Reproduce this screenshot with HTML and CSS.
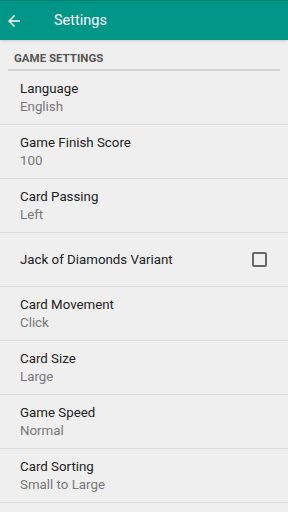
FILE: index.html
```html
<!DOCTYPE html>
<html lang="en">
<head>
  <meta charset="UTF-8" />
  <title>Settings</title>
  <meta name="viewport" content="width=device-width, initial-scale=1.0"/>
  <link rel="stylesheet" href="styles.css">
</head>
<body>
  <div class="toolbar">
    <svg class="back" width="18" height="18" viewBox="0 0 24 24">
      <path d="M20 11H7.83l5.59-5.59L12 4l-8 8 8 8 1.41-1.41L7.83 13H20v-2z" fill="#fff"/>
    </svg>
    <span class="title">Settings</span>
  </div>

  <div class="category">GAME SETTINGS</div>

  <div class="pref">
    <div class="pref-title">Language</div>
    <div class="pref-summary">English</div>
  </div>
  <div class="pref">
    <div class="pref-title">Game Finish Score</div>
    <div class="pref-summary">100</div>
  </div>
  <div class="pref">
    <div class="pref-title">Card Passing</div>
    <div class="pref-summary">Left</div>
  </div>
  <div class="pref pref-check">
    <div class="pref-title">Jack of Diamonds Variant</div>
    <div class="checkbox"></div>
  </div>
  <div class="pref">
    <div class="pref-title">Card Movement</div>
    <div class="pref-summary">Click</div>
  </div>
  <div class="pref">
    <div class="pref-title">Card Size</div>
    <div class="pref-summary">Large</div>
  </div>
  <div class="pref">
    <div class="pref-title">Game Speed</div>
    <div class="pref-summary">Normal</div>
  </div>
  <div class="pref">
    <div class="pref-title">Card Sorting</div>
    <div class="pref-summary">Small to Large</div>
  </div>
</body>
</html>
```

FILE: styles.css
```css
body {
  margin: 0;
  background: #efefef;
  font-family: Roboto, 'Noto Sans', sans-serif;
  color: #222;
  overflow: hidden;
}

.toolbar {
  height: 40px;
  background: #009688;
  border-top: 1px solid #00806f;
  box-sizing: border-box;
  display: flex;
  align-items: center;
  padding-left: 5px;
  box-shadow: 0 1px 2px rgba(0, 0, 0, 0.15);
}

.back {
  display: block;
}

.title {
  color: #fff;
  font-size: 14.5px;
  margin-left: 31px;
}

.category {
  margin: 0 8px;
  padding: 11px 6px 4px;
  font-size: 11.5px;
  font-weight: bold;
  color: #555;
  border-bottom: 2px solid #d2d2d2;
}

.pref {
  height: 54px;
  box-sizing: border-box;
  padding: 0 20px;
  display: flex;
  flex-direction: column;
  justify-content: center;
  border-bottom: 1px solid #dcdcdc;
}

.pref-title {
  font-size: 13.3px;
  line-height: 18px;
  color: #222;
}

.pref-summary {
  font-size: 13.3px;
  line-height: 18px;
  color: #777;
}

.pref-check {
  flex-direction: row;
  align-items: center;
  justify-content: space-between;
  padding-right: 21px;
}

.checkbox {
  width: 15px;
  height: 15px;
  box-sizing: border-box;
  border: 2px solid #666;
  border-radius: 2px;
}
```
